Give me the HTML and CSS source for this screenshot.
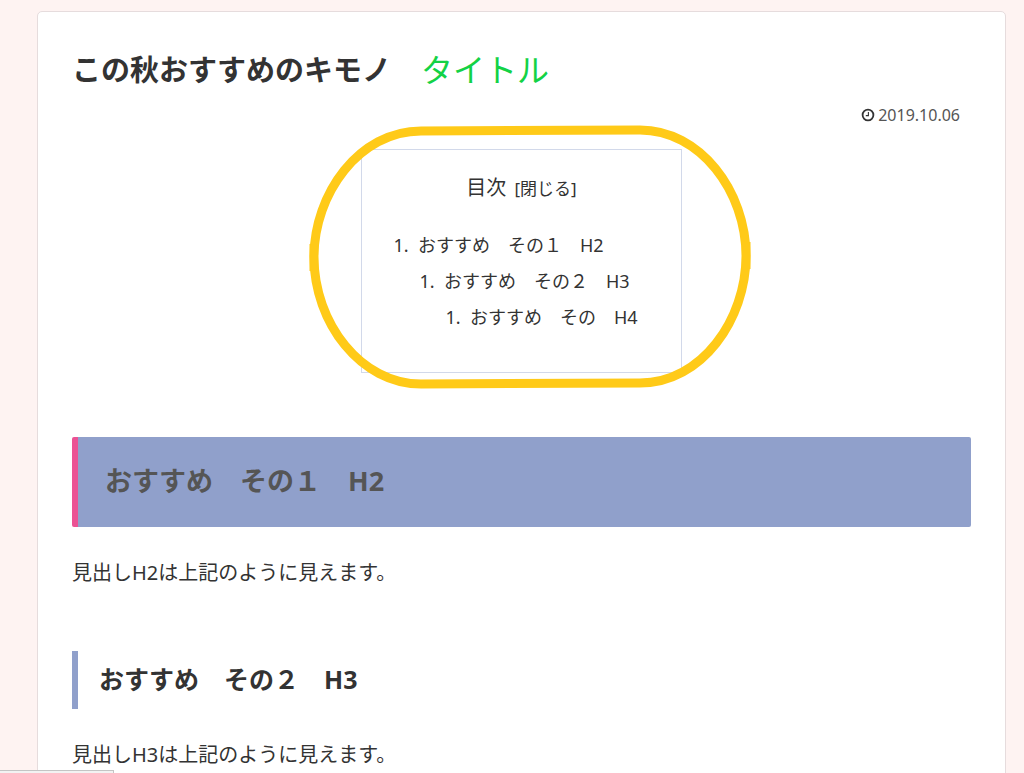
FILE: index.html
```html
<!DOCTYPE html>
<html lang="ja">
<head>
    <meta charset="UTF-8">
    <meta name="viewport" content="width=device-width, initial-scale=1.0">
    <title>この秋おすすめのキモノ</title>
    <link rel="stylesheet" href="styles.css">
</head>
<body>
    <main class="main">
        <article class="article">
            <header class="article-header">
                <h1 class="entry-title">この秋おすすめのキモノ</h1>
                <span class="title-note">タイトル</span>
            </header>

            <div class="date-tags">
                <svg class="clock" viewBox="0 0 14 14" aria-hidden="true">
                    <circle cx="7" cy="7" r="5.4" fill="none" stroke="currentColor" stroke-width="1.8"/>
                    <path d="M7.4 4v3.6H4.8" fill="none" stroke="currentColor" stroke-width="1.1"/>
                </svg>
                <time datetime="2019-10-06">2019.10.06</time>
            </div>

            <nav class="toc" aria-label="目次">
                <div class="toc-title">目次 <button type="button" class="toc-toggle">[閉じる]</button></div>
                <ol class="toc-list">
                    <li><a href="#toc1">おすすめ　その１　H2</a>
                        <ol>
                            <li><a href="#toc2">おすすめ　その２　H3</a>
                                <ol>
                                    <li><a href="#toc3">おすすめ　その　H4</a></li>
                                </ol>
                            </li>
                        </ol>
                    </li>
                </ol>
                <svg class="toc-mark" viewBox="0 0 442 264" aria-hidden="true">
                    <path d="M112 6 L331 5 C391 5 437 66 437 131 C437 194 393 258 331 258 L112 259 C52 259 5 198 5 132 C5 69 50 6 112 6 Z" fill="none" stroke="#ffca18" stroke-width="9"/>
                    <path d="M2 119v27M440 117v27" stroke="#ffca18" stroke-width="3"/>
                </svg>
            </nav>

            <h2 id="toc1" class="heading-2">おすすめ　その１　H2</h2>
            <p>見出しH2は上記のように見えます。</p>

            <h3 id="toc2" class="heading-3">おすすめ　その２　H3</h3>
            <p>見出しH3は上記のように見えます。</p>
        </article>
    </main>
    <div class="status-bar"></div>
</body>
</html>
```
FILE: styles.css
```css
* {
    box-sizing: border-box;
}

body {
    margin: 0;
    height: 100vh;
    overflow: hidden;
    background-color: #fef3f2;
    color: #333;
    font-family: "Noto Sans", "Noto Sans CJK JP", sans-serif;
    font-size: 20px;
    line-height: 36px;
}

.main {
    margin: 11px 18px 0 37px;
    padding: 34px;
    min-height: 100vh;
    background-color: #fff;
    border: 1px solid #e6dcdd;
    border-radius: 5px;
}

.article-header {
    display: flex;
    align-items: center;
    gap: 30px;
    height: 48px;
}

.entry-title {
    margin: 0;
    font-size: 29px;
    line-height: 48px;
}

.title-note {
    color: #13d246;
    font-size: 32px;
    line-height: 48px;
}

.date-tags {
    display: flex;
    justify-content: flex-end;
    align-items: center;
    gap: 3px;
    margin-top: 9px;
    padding-right: 11px;
    color: #555;
    font-size: 16px;
    line-height: 24px;
}

.clock {
    width: 14px;
    height: 14px;
    color: #333;
}

.toc {
    position: relative;
    width: 321px;
    height: 224px;
    margin: 22px auto 0;
    padding: 20px 30px;
    border: 1px solid #d2d9ea;
}

.toc-title {
    text-align: center;
}

.toc-toggle {
    margin-left: 3px;
    padding: 0;
    border: 0;
    background: none;
    color: inherit;
    font: inherit;
    font-size: 17px;
    cursor: pointer;
}

.toc-list,
.toc-list ol {
    margin: 0;
    padding-left: 26px;
    font-size: 18px;
    white-space: nowrap;
}

.toc-list {
    margin-top: 20px;
}

.toc-list li::marker {
    content: counter(list-item) ".\00a0\00a0";
}

.toc-list a {
    color: inherit;
    text-decoration: none;
}

/* hand-drawn ring round the table of contents */
.toc-mark {
    position: absolute;
    top: -25px;
    left: -53px;
    width: 442px;
    height: 264px;
    pointer-events: none;
}

.heading-2 {
    margin: 64px 0 28px;
    padding: 24px 27px 26px;
    background-color: #90a0cb;
    border-left: 6px solid #eb5294;
    border-radius: 2px;
    color: #555;
    font-size: 27px;
    line-height: 40px;
}

.heading-3 {
    margin: 60px 0 28px;
    padding: 9px 21px 11px;
    border-left: 6px solid #90a0cb;
    font-size: 25px;
    line-height: 38px;
}

p {
    margin: 0;
}

/* browser link status in the corner */
.status-bar {
    position: fixed;
    left: 0;
    bottom: 0;
    width: 114px;
    height: 3px;
    background-color: #f2f2f2;
    border-top: 1px solid #c4c4c4;
    border-right: 1px solid #c4c4c4;
}
```
